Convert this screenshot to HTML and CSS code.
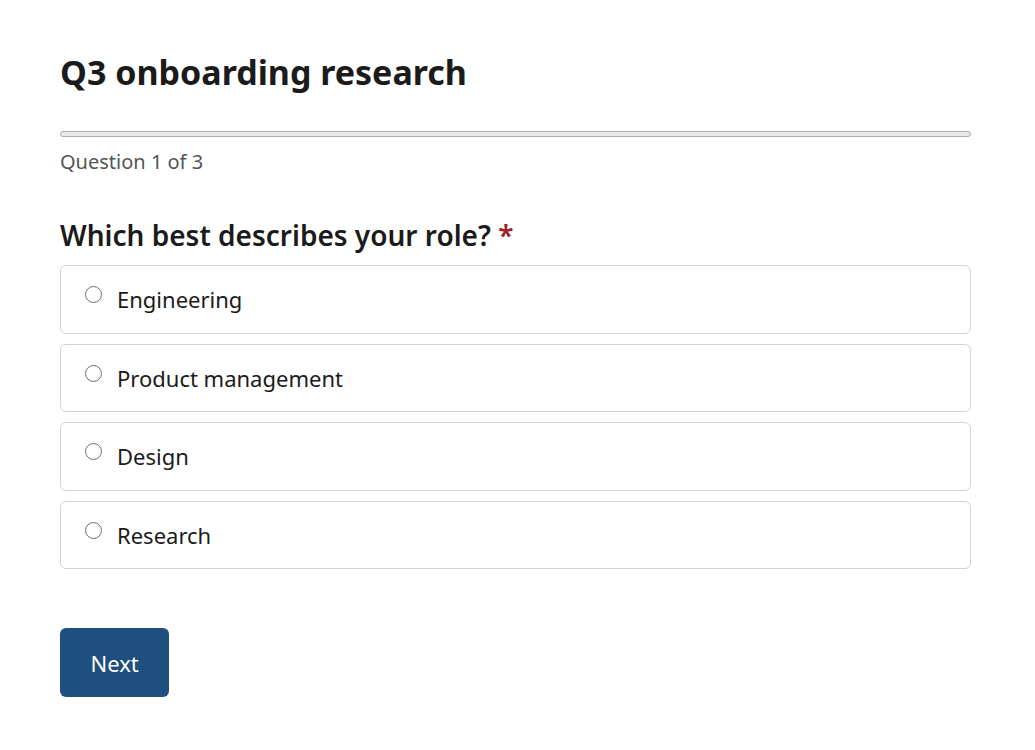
FILE: index.html
```html
<!DOCTYPE html>
<html lang="en">
<head>
<meta charset="utf-8">
<title>Q3 onboarding research</title>
<link rel="stylesheet" href="styles.css">
</head>
<body>
<main class="survey">
  <h1 class="survey-title">Q3 onboarding research</h1>
  <div class="progress"><div class="progress-fill" style="width:0%"></div></div>
  <p class="progress-label">Question 1 of 3</p>
  <section class="question">
    <h2 class="question-title">Which best describes your role? <span class="required">*</span></h2>
    <div class="options">
      <label class="option"><input class="radio" type="radio" name="role" value="engineering"><span class="option-text">Engineering</span></label>
      <label class="option"><input class="radio" type="radio" name="role" value="product"><span class="option-text">Product management</span></label>
      <label class="option"><input class="radio" type="radio" name="role" value="design"><span class="option-text">Design</span></label>
      <label class="option"><input class="radio" type="radio" name="role" value="research"><span class="option-text">Research</span></label>
    </div>
  </section>
  <button class="btn-next" type="button">Next</button>
</main>
</body>
</html>
```

FILE: styles.css
```css
* { box-sizing: border-box; }
html, body { margin: 0; padding: 0; background: #ffffff; }
body {
  font-family: "Noto Sans", "Open Sans", "DejaVu Sans", sans-serif;
  color: #1b1b1b;
}
.survey {
  width: 911px;
  margin: 0 0 0 60px;
  padding-top: 49px;
  display: flex;
  flex-direction: column;
  align-items: flex-start;
}
.survey-title {
  margin: 0;
  font-size: 34px;
  line-height: 46px;
  font-weight: 700;
  color: #1b1b1b;
}
.progress {
  margin-top: 36px;
  width: 100%;
  height: 6px;
  border: 1px solid #adadad;
  border-radius: 4px;
  background: #e9e9e9;
  overflow: hidden;
}
.progress-fill { height: 100%; background: #1f4f7e; }
.progress-label {
  margin: 11px 0 0;
  font-size: 20px;
  line-height: 28px;
  color: #555555;
}
.question {
  margin: 40px 0 0;
  width: 100%;
}
.question-title {
  margin: 0;
  font-size: 28px;
  line-height: 38px;
  font-weight: 600;
  color: #1b1b1b;
}
.required { color: #9b2226; }
.options {
  margin-top: 11px;
  display: flex;
  flex-direction: column;
  gap: 10px;
}
.option {
  display: flex;
  align-items: flex-start;
  gap: 15px;
  padding: 18px 24px 17.5px;
  border: 1px solid #d3d3d3;
  border-radius: 6px;
  background: #ffffff;
  cursor: pointer;
}
.radio {
  appearance: none;
  -webkit-appearance: none;
  margin: 2px 0 0;
  width: 17px;
  height: 17px;
  flex: 0 0 17px;
  border: 1.5px solid #6e6e6e;
  border-radius: 50%;
  background: #ffffff;
}
.radio:checked { border: 5px solid #1f4f7e; }
.option-text {
  font-size: 22px;
  line-height: 31px;
  color: #1b1b1b;
}
.btn-next {
  margin-top: 59px;
  padding: 19.5px 30.5px 19.5px;
  border: 0;
  border-radius: 6px;
  background: #1f4f7e;
  color: #ffffff;
  font-family: inherit;
  font-size: 22px;
  line-height: 30px;
  cursor: pointer;
}
```
